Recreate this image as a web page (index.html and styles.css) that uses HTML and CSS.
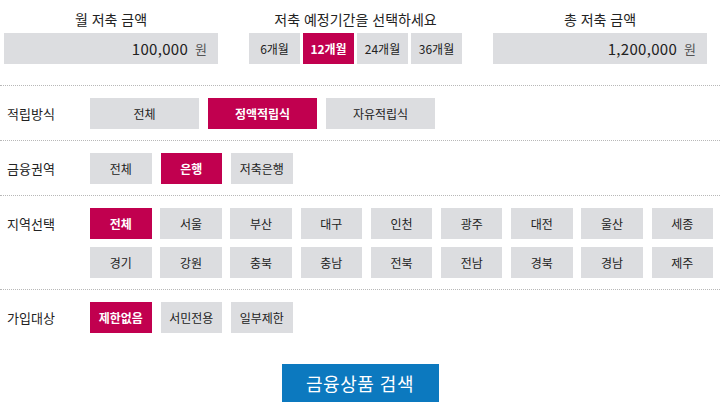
FILE: index.html
```html
<!DOCTYPE html>
<html lang="ko">
<head>
<meta charset="utf-8">
<link rel="stylesheet" href="styles.css">
</head>
<body>
<div class="top">
  <div class="col col-amount">
    <div class="top-label">월 저축 금액</div>
    <div class="box"><span class="num">100,000</span><span class="won">원</span></div>
  </div>
  <div class="col col-period">
    <div class="top-label">저축 예정기간을 선택하세요</div>
    <div class="periods">
      <span class="btn">6개월</span>
      <span class="btn on">12개월</span>
      <span class="btn">24개월</span>
      <span class="btn">36개월</span>
    </div>
  </div>
  <div class="col col-amount">
    <div class="top-label">총 저축 금액</div>
    <div class="box"><span class="num">1,200,000</span><span class="won">원</span></div>
  </div>
</div>

<div class="row">
  <div class="label">적립방식</div>
  <div class="opts wide">
    <span class="btn">전체</span>
    <span class="btn on">정액적립식</span>
    <span class="btn">자유적립식</span>
  </div>
</div>

<div class="row">
  <div class="label">금융권역</div>
  <div class="opts">
    <span class="btn">전체</span>
    <span class="btn on">은행</span>
    <span class="btn">저축은행</span>
  </div>
</div>

<div class="row">
  <div class="label">지역선택</div>
  <div class="opts grid">
    <span class="btn on">전체</span>
    <span class="btn">서울</span>
    <span class="btn">부산</span>
    <span class="btn">대구</span>
    <span class="btn">인천</span>
    <span class="btn">광주</span>
    <span class="btn">대전</span>
    <span class="btn">울산</span>
    <span class="btn">세종</span>
    <span class="btn">경기</span>
    <span class="btn">강원</span>
    <span class="btn">충북</span>
    <span class="btn">충남</span>
    <span class="btn">전북</span>
    <span class="btn">전남</span>
    <span class="btn">경북</span>
    <span class="btn">경남</span>
    <span class="btn">제주</span>
  </div>
</div>

<div class="row row-last">
  <div class="label">가입대상</div>
  <div class="opts">
    <span class="btn on">제한없음</span>
    <span class="btn">서민전용</span>
    <span class="btn">일부제한</span>
  </div>
</div>

<div class="search-wrap">
  <span class="search">금융상품 검색</span>
</div>
</body>
</html>
```

FILE: styles.css
```css
* { box-sizing: border-box; }
html, body { margin: 0; padding: 0; background: #fff; }
body {
  width: 720px;
  height: 404px;
  overflow: hidden;
  font-family: "Noto Sans CJK KR", "Noto Sans", sans-serif;
  color: #333;
}
.top {
  display: flex;
  gap: 31px;
  padding: 9px 0 0 4px;
  height: 85px;
}
.col-amount { width: 214px; }
.col-period { width: 213px; }
.top-label {
  font-size: 14px;
  line-height: 20px;
  text-align: center;
  color: #222;
  margin-bottom: 4px;
}
.box {
  height: 31px;
  background: #dcdde0;
  display: flex;
  align-items: center;
  justify-content: flex-end;
  padding-right: 11px;
  gap: 7px;
}
.num { font-size: 15px; color: #222; letter-spacing: 0.3px; }
.won { font-size: 13px; color: #555; }
.periods { display: flex; gap: 3px; }
.periods .btn { width: 51px; }

.btn {
  display: flex;
  align-items: center;
  justify-content: center;
  height: 31px;
  background: #dcdde0;
  font-size: 12px;
  color: #222;
  white-space: nowrap;
}
.btn.on {
  background: #c1004f;
  color: #fff;
  font-weight: 700;
}

.row {
  display: flex;
  border-top: 1px dotted #b8b8b8;
  padding: 12px 0 11px;
}
.row-last { padding-bottom: 0; }
.label {
  width: 90px;
  flex: none;
  padding-left: 7px;
  font-size: 13px;
  line-height: 31px;
  color: #222;
}
.opts { display: flex; gap: 9px; }
.opts .btn { width: 61.5px; }
.opts.wide .btn { width: 109px; }
.opts.grid {
  display: grid;
  grid-template-columns: repeat(9, 61.5px);
  column-gap: 8.7px;
  row-gap: 8px;
}

.search-wrap {
  display: flex;
  justify-content: center;
  padding: 31px 0 0 0;
}
.search {
  width: 157px;
  height: 38px;
  background: #0c79bf;
  color: #fff;
  font-size: 18px;
  display: flex;
  align-items: center;
  justify-content: center;
  letter-spacing: 0.5px;
}
```
